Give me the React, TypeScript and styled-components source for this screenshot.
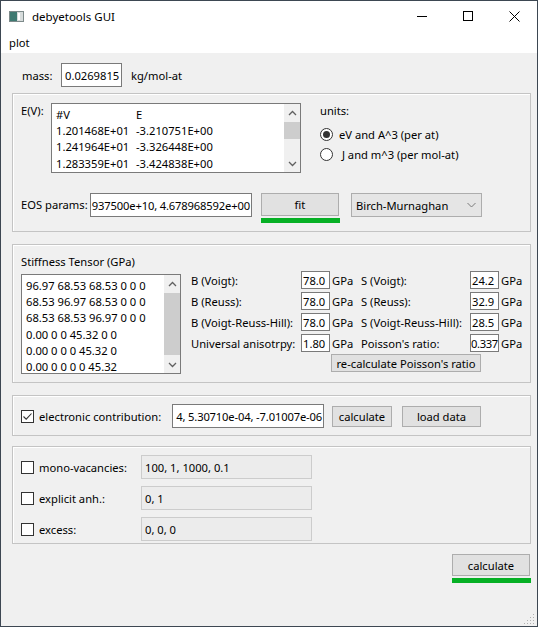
import React from 'react';
import styled, { createGlobalStyle } from 'styled-components';

const Global = createGlobalStyle`
  html, body { margin: 0; padding: 0; background: #ffffff; }
  body { font-family: "Noto Sans", "Open Sans", sans-serif; font-size: 11.2px; color: #000; }
  * { box-sizing: border-box; }
  #root { width: 538px; height: 627px; }
`;

const Window = styled.div`
  width: 538px;
  height: 627px;
  border: 1px solid #3d4752;
  display: flex;
  flex-direction: column;
  background: #f0f0f0;
  overflow: hidden;
  position: relative;
`;

const TitleBar = styled.div`
  height: 30px;
  background: #fff;
  display: flex;
  align-items: center;
  padding-left: 8px;
  flex-shrink: 0;
`;

const TitleText = styled.span`
  margin-left: 8px;
  font-size: 11.5px;
  flex: 1;
`;

const CtrlButton = styled.div`
  width: 46px;
  height: 30px;
  display: flex;
  align-items: center;
  justify-content: center;
`;

const MenuBar = styled.div`
  height: 22px;
  background: #fff;
  display: flex;
  align-items: center;
  padding-left: 8px;
  flex-shrink: 0;
`;

const Content = styled.div`
  flex: 1;
  display: flex;
  flex-direction: column;
  padding: 0 6px 0 11px;
`;

const Row = styled.div<{ $mt?: number; $h?: number; $pl?: number; $top?: boolean }>`
  display: flex;
  align-items: ${p => (p.$top ? 'flex-start' : 'center')};
  margin-top: ${p => p.$mt ?? 0}px;
  height: ${p => (p.$h ? `${p.$h}px` : 'auto')};
  padding-left: ${p => p.$pl ?? 0}px;
`;

const Label = styled.span<{ $w?: number; $ml?: number; $lh?: number }>`
  display: inline-block;
  width: ${p => (p.$w ? `${p.$w}px` : 'auto')};
  margin-left: ${p => p.$ml ?? 0}px;
  line-height: ${p => (p.$lh ? `${p.$lh}px` : 'normal')};
  white-space: nowrap;
  flex-shrink: 0;
`;

const LineEdit = styled.div<{ $w: number; $disabled?: boolean; $pl?: number; $scrolled?: boolean }>`
  width: ${p => p.$w}px;
  height: 24px;
  border: 1px solid ${p => (p.$disabled ? '#cccccc' : '#7a7a7a')};
  background: ${p => (p.$disabled ? '#ececec' : '#ffffff')};
  display: flex;
  align-items: center;
  justify-content: ${p => (p.$scrolled ? 'flex-end' : 'flex-start')};
  padding: 0 ${p => (p.$scrolled ? 1 : 0)}px 0 ${p => p.$pl ?? 3}px;
  letter-spacing: ${p => (p.$scrolled ? '-0.15px' : 'normal')};
  overflow: hidden;
  white-space: nowrap;
  flex-shrink: 0;
`;

const Frame = styled.div<{ $mt: number; $h: number; $pt?: number }>`
  margin-top: ${p => p.$mt}px;
  height: ${p => p.$h}px;
  border: 1px solid #c4c4c4;
  box-shadow: inset 1px 1px 0 #ffffff;
  padding: ${p => p.$pt ?? 0}px 0 0 8px;
  display: flex;
  flex-direction: column;
  flex-shrink: 0;
`;

const TextBox = styled.div<{ $w: number; $h: number; $mt?: number }>`
  width: ${p => p.$w}px;
  height: ${p => p.$h}px;
  margin-top: ${p => p.$mt ?? 0}px;
  border: 1px solid #7a7a7a;
  background: #fff;
  display: flex;
  overflow: hidden;
  flex-shrink: 0;
`;

const TextLines = styled.div`
  flex: 1;
  padding: 3px 0 0 4px;
  line-height: 16.2px;
  overflow: hidden;
  white-space: nowrap;
`;

const Col = styled.span<{ $w: number }>`
  display: inline-block;
  width: ${p => p.$w}px;
`;

const ScrollBar = styled.div`
  width: 16px;
  display: flex;
  flex-direction: column;
  background: #f0f0f0;
`;

const ScrollArrow = styled.div`
  height: 17px;
  display: flex;
  align-items: center;
  justify-content: center;
  flex-shrink: 0;
`;

const ScrollTrack = styled.div`
  flex: 1;
  display: flex;
  flex-direction: column;
`;

const Thumb = styled.div<{ $top: number; $h: number }>`
  margin-top: ${p => p.$top}px;
  height: ${p => p.$h}px;
  background: #cdcdcd;
`;

const Units = styled.div`
  display: flex;
  flex-direction: column;
  margin-left: 19px;
`;

const RadioRow = styled.div<{ $mt: number }>`
  display: flex;
  align-items: center;
  margin-top: ${p => p.$mt}px;
  height: 16px;
`;

const RadioCircle = styled.span<{ $checked?: boolean }>`
  width: 13px;
  height: 13px;
  border-radius: 50%;
  border: 1px solid #333;
  background: #fff;
  display: inline-flex;
  align-items: center;
  justify-content: center;
  margin-right: 6px;
  &::after {
    content: '';
    width: 7px;
    height: 7px;
    border-radius: 50%;
    background: ${p => (p.$checked ? '#333' : 'transparent')};
  }
`;

const Button = styled.div<{ $w: number; $h?: number; $ml?: number }>`
  width: ${p => p.$w}px;
  height: ${p => p.$h ?? 22}px;
  margin-left: ${p => p.$ml ?? 0}px;
  background: #e1e1e1;
  border: 1px solid #adadad;
  display: flex;
  align-items: center;
  justify-content: center;
  white-space: nowrap;
  flex-shrink: 0;
`;

const ButtonStack = styled.div<{ $ml?: number }>`
  display: flex;
  flex-direction: column;
  align-self: flex-start;
  margin-left: ${p => p.$ml ?? 0}px;
`;

const Progress = styled.div<{ $w: number }>`
  width: ${p => p.$w}px;
  height: 5px;
  margin-top: 2px;
  background: #06b025;
`;

const Combo = styled.div`
  width: 131px;
  height: 24px;
  margin-left: 11px;
  background: #e5e5e5;
  border: 1px solid #adadad;
  display: flex;
  align-items: center;
  justify-content: space-between;
  padding: 0 5px 0 4px;
  align-self: flex-start;
`;

const StatsGrid = styled.div`
  display: grid;
  grid-template-columns: 110px 29px 31px 109px 29px 30px;
  grid-auto-rows: 18px;
  row-gap: 3px;
  align-items: center;
`;

const StatBox = styled.div<{ $tight?: boolean }>`
  height: 18px;
  border: 1px solid #7a7a7a;
  background: #fff;
  padding: 0 0 0 ${p => (p.$tight ? 0 : 1)}px;
  letter-spacing: ${p => (p.$tight ? '-0.35px' : 'normal')};
  line-height: 17px;
  overflow: hidden;
  white-space: nowrap;
`;

const Unit = styled.span`
  padding-left: 2px;
`;

const StatsArea = styled.div`
  display: flex;
  flex-direction: column;
  margin-left: 10px;
`;

const RecalcRow = styled.div`
  display: flex;
  margin-top: 2px;
  padding-left: 140px;
`;

const CheckBox = styled.span`
  width: 13px;
  height: 13px;
  border: 1px solid #333;
  background: #fff;
  display: inline-flex;
  align-items: center;
  justify-content: center;
  flex-shrink: 0;
  margin-right: 5px;
`;

const BottomBar = styled.div`
  display: flex;
  justify-content: flex-end;
  margin-top: 10px;
`;

const Grip = styled.div`
  position: absolute;
  right: 2px;
  bottom: 2px;
  width: 11px;
  height: 11px;
`;

const Chevron = ({ up }: { up?: boolean }) => (
  <svg width="9" height="6" viewBox="0 0 9 6">
    <path d={up ? 'M1 5 L4.5 1.5 L8 5' : 'M1 1 L4.5 4.5 L8 1'} fill="none" stroke="#606060" strokeWidth="1.3" />
  </svg>
);

const Scroller = ({ top, h }: { top: number; h: number }) => (
  <ScrollBar>
    <ScrollArrow><Chevron up /></ScrollArrow>
    <ScrollTrack><Thumb $top={top} $h={h} /></ScrollTrack>
    <ScrollArrow><Chevron /></ScrollArrow>
  </ScrollBar>
);

const Check = ({ checked }: { checked?: boolean }) => (
  <CheckBox>
    {checked && (
      <svg width="11" height="11" viewBox="0 0 11 11">
        <path d="M1.5 5.5 L4.2 8.2 L9.5 2.5" fill="none" stroke="#333" strokeWidth="1.1" />
      </svg>
    )}
  </CheckBox>
);

const evLines: [string, string][] = [
  ['#V', 'E'],
  ['1.201468E+01', '-3.210751E+00'],
  ['1.241964E+01', '-3.326448E+00'],
  ['1.283359E+01', '-3.424838E+00'],
  ['1.325645E+01', '-3.508419E+00'],
];

const tensor = [
  '96.97 68.53 68.53 0 0 0',
  '68.53 96.97 68.53 0 0 0',
  '68.53 68.53 96.97 0 0 0',
  '0.00 0 0 45.32 0 0',
  '0.00 0 0 0 45.32 0',
  '0.00 0 0 0 0 45.32',
];

const stats: [string, string, string, string][] = [
  ['B (Voigt):', '78.0', 'S (Voigt):', '24.2'],
  ['B (Reuss):', '78.0', 'S (Reuss):', '32.9'],
  ['B (Voigt-Reuss-Hill):', '78.0', 'S (Voigt-Reuss-Hill):', '28.5'],
  ['Universal anisotrpy:', '1.80', "Poisson's ratio:", '0.337'],
];

const extras: [string, string][] = [
  ['mono-vacancies:', '100, 1, 1000, 0.1'],
  ['explicit anh.:', '0, 1'],
  ['excess:', '0, 0, 0'],
];

export default function App() {
  return (
    <>
      <Global />
      <Window>
        <TitleBar>
          <svg width="15" height="11" viewBox="0 0 15 11">
            <rect x="0.5" y="0.5" width="14" height="10" fill="#d7dcdc" stroke="#7d8a8a" />
            <rect x="1" y="1" width="7" height="9" fill="#3f7a72" />
            <rect x="9" y="2" width="2" height="7" fill="#ffffff" />
          </svg>
          <TitleText>debyetools GUI</TitleText>
          <CtrlButton>
            <svg width="10" height="10" viewBox="0 0 10 10"><path d="M0 5.5 H10" stroke="#000" strokeWidth="1" /></svg>
          </CtrlButton>
          <CtrlButton>
            <svg width="10" height="10" viewBox="0 0 10 10"><rect x="0.5" y="0.5" width="9" height="9" fill="none" stroke="#000" strokeWidth="1" /></svg>
          </CtrlButton>
          <CtrlButton>
            <svg width="11" height="11" viewBox="0 0 11 11"><path d="M0.5 0.5 L10.5 10.5 M10.5 0.5 L0.5 10.5" stroke="#000" strokeWidth="1" /></svg>
          </CtrlButton>
        </TitleBar>
        <MenuBar>plot</MenuBar>
        <Content>
          <Row $mt={10} $h={24} $pl={10}>
            <Label $w={39}>mass:</Label>
            <LineEdit $w={61}>0.0269815</LineEdit>
            <Label $ml={9}>kg/mol-at</Label>
          </Row>

          <Frame $mt={6} $h={139} $pt={9}>
            <Row $top>
              <Label $w={30} $lh={16}>E(V):</Label>
              <TextBox $w={250} $h={70}>
                <TextLines>
                  {evLines.map(([v, e]) => (
                    <div key={v}>
                      <Col $w={80}>{v}</Col>
                      {e}
                    </div>
                  ))}
                </TextLines>
                <Scroller top={1} h={17} />
              </TextBox>
              <Units>
                <Label $lh={16}>units:</Label>
                <RadioRow $mt={7}>
                  <RadioCircle $checked />
                  eV and A^3 (per at)
                </RadioRow>
                <RadioRow $mt={4}>
                  <RadioCircle />
                  &nbsp;J and m^3 (per mol-at)
                </RadioRow>
              </Units>
            </Row>
            <Row $mt={20} $top>
              <Label $w={69} $lh={24}>EOS params:</Label>
              <LineEdit $w={162} $pl={1} $scrolled>937500e+10, 4.678968592e+00</LineEdit>
              <ButtonStack $ml={9}>
                <Button $w={78} $h={23}>fit</Button>
                <Progress $w={79} />
              </ButtonStack>
              <Combo>
                <span>Birch-Murnaghan</span>
                <svg width="9" height="6" viewBox="0 0 9 6">
                  <path d="M0.5 1 L4.5 5 L8.5 1" fill="none" stroke="#7a7a7a" strokeWidth="1" />
                </svg>
              </Combo>
            </Row>
          </Frame>

          <Frame $mt={12} $h={139} $pt={9}>
            <Label $lh={16}>Stiffness Tensor (GPa)</Label>
            <Row $mt={1} $top>
              <TextBox $w={160} $h={100} $mt={3}>
                <TextLines>
                  {tensor.map(t => (
                    <div key={t}>{t}</div>
                  ))}
                </TextLines>
                <Scroller top={1} h={62} />
              </TextBox>
              <StatsArea>
                <StatsGrid>
                  {stats.map(([l1, v1, l2, v2]) => (
                    <React.Fragment key={l1}>
                      <Label>{l1}</Label>
                      <StatBox $tight={v1.length > 4}>{v1}</StatBox>
                      <Unit>GPa</Unit>
                      <Label>{l2}</Label>
                      <StatBox $tight={v2.length > 4}>{v2}</StatBox>
                      <Unit>GPa</Unit>
                    </React.Fragment>
                  ))}
                </StatsGrid>
                <RecalcRow>
                  <Button $w={150} $h={18}>re-calculate Poisson's ratio</Button>
                </RecalcRow>
              </StatsArea>
            </Row>
          </Frame>

          <Frame $mt={12} $h={41} $pt={8}>
            <Row $h={24}>
              <Check checked />
              <Label $w={133}>electronic contribution:</Label>
              <LineEdit $w={152} $pl={2} $scrolled>4, 5.30710e-04, -7.01007e-06</LineEdit>
              <Button $w={60} $h={21} $ml={8}>calculate</Button>
              <Button $w={79} $h={21} $ml={10}>load data</Button>
            </Row>
          </Frame>

          <Frame $mt={10} $h={98} $pt={8}>
            {extras.map(([l, v], i) => (
              <Row key={l} $h={24} $mt={i === 0 ? 0 : 7}>
                <Check />
                <Label $w={102}>{l}</Label>
                <LineEdit $w={171} $disabled>{v}</LineEdit>
              </Row>
            ))}
          </Frame>

          <BottomBar>
            <ButtonStack>
              <Button $w={78} $h={22}>calculate</Button>
              <Progress $w={79} />
            </ButtonStack>
          </BottomBar>
        </Content>
        <Grip>
          <svg width="11" height="11" viewBox="0 0 11 11">
            {[[9, 1], [9, 4], [6, 4], [9, 7], [6, 7], [3, 7], [9, 10], [6, 10], [3, 10], [0, 10]].map(([x, y]) => (
              <rect key={`${x}-${y}`} x={x} y={y - 1} width="1" height="1" fill="#b0b0b0" />
            ))}
          </svg>
        </Grip>
      </Window>
    </>
  );
}
